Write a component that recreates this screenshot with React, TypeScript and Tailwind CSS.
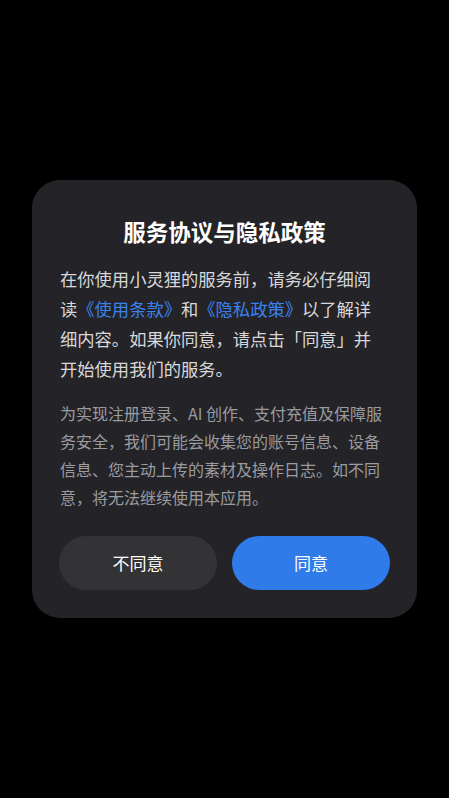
import React from 'react';

const font = { fontFamily: '"Noto Sans CJK SC", "Noto Sans", sans-serif' };

export default function App() {
  return (
    <div className="w-[449px] h-[798px] bg-black flex items-start justify-center pt-[180px]" style={font}>
      <div className="w-[385px] bg-[#242428] rounded-[28px] pt-[35px] pb-[28px] px-[27px] flex flex-col">
        <h1 className="text-white text-[22.5px] font-bold leading-[32px] text-center">服务协议与隐私政策</h1>

        <p className="mt-[17px] pl-[1px] pr-[8px] text-[17.3px] leading-[30px] text-[#d8d8da]">
          在你使用小灵狸的服务前，请务必仔细阅读
          <span className="text-[#3a82ee]">《使用条款》</span>和
          <span className="text-[#3a82ee]">《隐私政策》</span>以了解详细内容。如果你同意，请点击「同意」并开始使用我们的服务。
        </p>

        <p className="mt-[15px] pl-[1px] text-[16px] leading-[28px] text-[#9b9ba0]">
          为实现注册登录、AI 创作、支付充值及保障服务安全，我们可能会收集您的账号信息、设备信息、您主动上传的素材及操作日志。如不同意，将无法继续使用本应用。
        </p>

        <div className="mt-[25px] flex gap-[15px]">
          <button className="flex-1 h-[54px] rounded-full bg-[#333336] text-white text-[17px]">不同意</button>
          <button className="flex-1 h-[54px] rounded-full bg-[#2f7bea] text-white text-[17px]">同意</button>
        </div>
      </div>
    </div>
  );
}
